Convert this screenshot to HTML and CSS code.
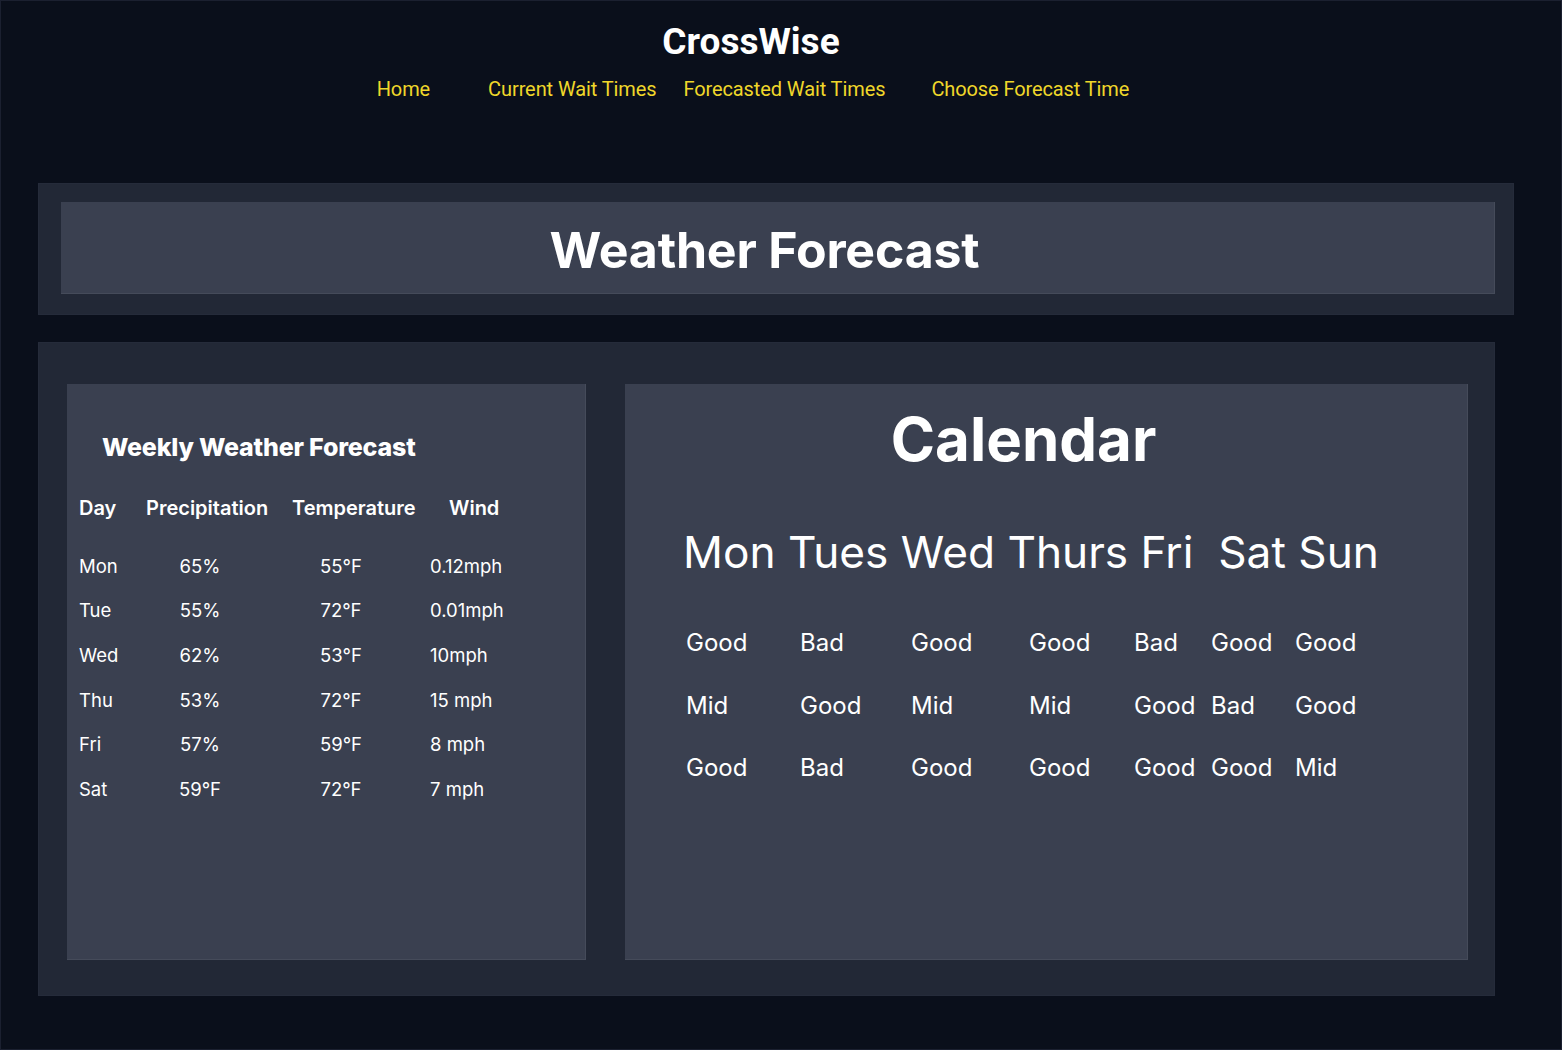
FILE: index.html
```html
<!DOCTYPE html>
<html lang="en">
<head>
<meta charset="utf-8">
<title>CrossWise - Weather Forecast</title>
<link rel="stylesheet" href="styles.css">
</head>
<body>
<div class="page">
  <header class="site-header">
    <h1 class="brand">CrossWise</h1>
    <nav class="nav">
      <a class="nav-link nav-home" href="#">Home</a>
      <a class="nav-link nav-current" href="#">Current Wait Times</a>
      <a class="nav-link nav-forecasted" href="#">Forecasted Wait Times</a>
      <a class="nav-link nav-choose" href="#">Choose Forecast Time</a>
    </nav>
  </header>

  <section class="banner">
    <div class="banner-inner">
      <h2 class="banner-title">Weather Forecast</h2>
    </div>
  </section>

  <section class="content">
    <div class="card weekly">
      <h3 class="weekly-title">Weekly Weather Forecast</h3>
      <div class="wtable">
        <div class="th th-day">Day</div>
        <div class="th th-prec">Precipitation</div>
        <div class="th th-temp">Temperature</div>
        <div class="th th-wind">Wind</div>

        <div class="td day">Mon</div><div class="td prec">65%</div><div class="td temp">55°F</div><div class="td wind">0.12mph</div>
        <div class="td day">Tue</div><div class="td prec">55%</div><div class="td temp">72°F</div><div class="td wind">0.01mph</div>
        <div class="td day">Wed</div><div class="td prec">62%</div><div class="td temp">53°F</div><div class="td wind">10mph</div>
        <div class="td day">Thu</div><div class="td prec">53%</div><div class="td temp">72°F</div><div class="td wind">15 mph</div>
        <div class="td day">Fri</div><div class="td prec">57%</div><div class="td temp">59°F</div><div class="td wind">8 mph</div>
        <div class="td day">Sat</div><div class="td prec">59°F</div><div class="td temp">72°F</div><div class="td wind">7 mph</div>
      </div>
    </div>

    <div class="card calendar">
      <h2 class="cal-title">Calendar</h2>
      <div class="cal-days">Mon Tues Wed Thurs Fri  Sat Sun</div>
      <div class="cal-grid">
        <span>Good</span><span>Bad</span><span>Good</span><span>Good</span><span>Bad</span><span>Good</span><span>Good</span>
        <span>Mid</span><span>Good</span><span>Mid</span><span>Mid</span><span>Good</span><span>Bad</span><span>Good</span>
        <span>Good</span><span>Bad</span><span>Good</span><span>Good</span><span>Good</span><span>Good</span><span>Mid</span>
      </div>
    </div>
  </section>
</div>
</body>
</html>
```

FILE: styles.css
```css
* { box-sizing: border-box; }

html, body {
  margin: 0;
  padding: 0;
  background: #0a0f1b;
}

.page {
  width: 1562px;
  min-height: 1050px;
  border: 1px solid #1b2030;
  background: #0a0f1b;
  font-family: Inter, "Noto Sans", sans-serif;
  color: #ffffff;
  padding-top: 19px;
}

/* Header */
.site-header {
  display: flex;
  flex-direction: column;
  align-items: center;
  padding-right: 60px;
  font-family: Roboto, "Liberation Sans", sans-serif;
}

.brand {
  margin: 0;
  font-size: 37px;
  line-height: 44px;
  font-weight: 700;
  color: #ffffff;
}

.nav {
  display: flex;
  margin-top: 13px;
  margin-left: 4px;
  gap: 27px;
}

.nav-link {
  font-size: 20px;
  line-height: 24px;
  color: #f0d72a;
  text-decoration: none;
  letter-spacing: -0.1px;
}

.nav-current { margin-left: 31px; }
.nav-choose { margin-left: 19px; }

/* Banner */
.banner {
  margin: 82px 0 0 37px;
  width: 1476px;
  background: #222836;
  padding: 18px 18px 20px 22px;
  border: 1px solid #252b3a;
}

.banner-inner {
  background: #3a4050;
  height: 92px;
  display: flex;
  align-items: center;
  justify-content: center;
  padding-right: 26px;
  border-right: 1px solid #454b5a;
  border-bottom: 1px solid #454b5a;
}

.banner-title {
  margin: 0;
  font-size: 50px;
  font-weight: 700;
  line-height: 60px;
  padding-top: 4px;
  letter-spacing: -0.2px;
}

/* Content */
.content {
  margin: 27px 0 0 37px;
  width: 1457px;
  height: 654px;
  background: #222836;
  border: 1px solid #252b3a;
  padding: 41px 26px 35px 28px;
  display: flex;
  gap: 39px;
}

.card {
  background: #3a4050;
  border-right: 1px solid #454b5a;
  border-bottom: 1px solid #454b5a;
  height: 576px;
}

.weekly {
  width: 519px;
  padding: 48px 0 0 12px;
}

.weekly-title {
  margin: 0 0 0 23px;
  font-size: 25px;
  line-height: 30px;
  font-weight: 800;
  letter-spacing: -0.2px;
}

.wtable {
  display: grid;
  grid-template-columns: 61px 120px 162px 120px;
  grid-auto-rows: 44.6px;
  margin-top: 37px;
  align-items: center;
}

.th {
  font-size: 20px;
  font-weight: 600;
  height: 44.6px;
  line-height: 30px;
  margin-bottom: 12px;
  white-space: nowrap;
}

.th-prec { padding-left: 6px; }
.th-temp { padding-left: 32px; }
.th-wind { padding-left: 27px; }

.td {
  font-size: 18.5px;
  line-height: 24px;
  font-weight: 400;
  white-space: nowrap;
}

.prec, .temp { text-align: center; }
.wind { padding-left: 8px; }

/* Calendar */
.calendar {
  width: 843px;
  padding: 19px 0 0 0;
}

.cal-title {
  margin: 0;
  text-align: center;
  padding-right: 45px;
  font-size: 60px;
  line-height: 72px;
  font-weight: 700;
}

.cal-days {
  margin: 50px 0 0 58px;
  font-size: 44.2px;
  line-height: 54px;
  white-space: pre;
  font-weight: 400;
}

.cal-grid {
  margin: 49px 0 0 61px;
  display: grid;
  grid-template-columns: 114px 111px 118px 105px 77px 84px 80px;
  grid-auto-rows: 62.5px;
  font-size: 24px;
  line-height: 30px;
}
```
